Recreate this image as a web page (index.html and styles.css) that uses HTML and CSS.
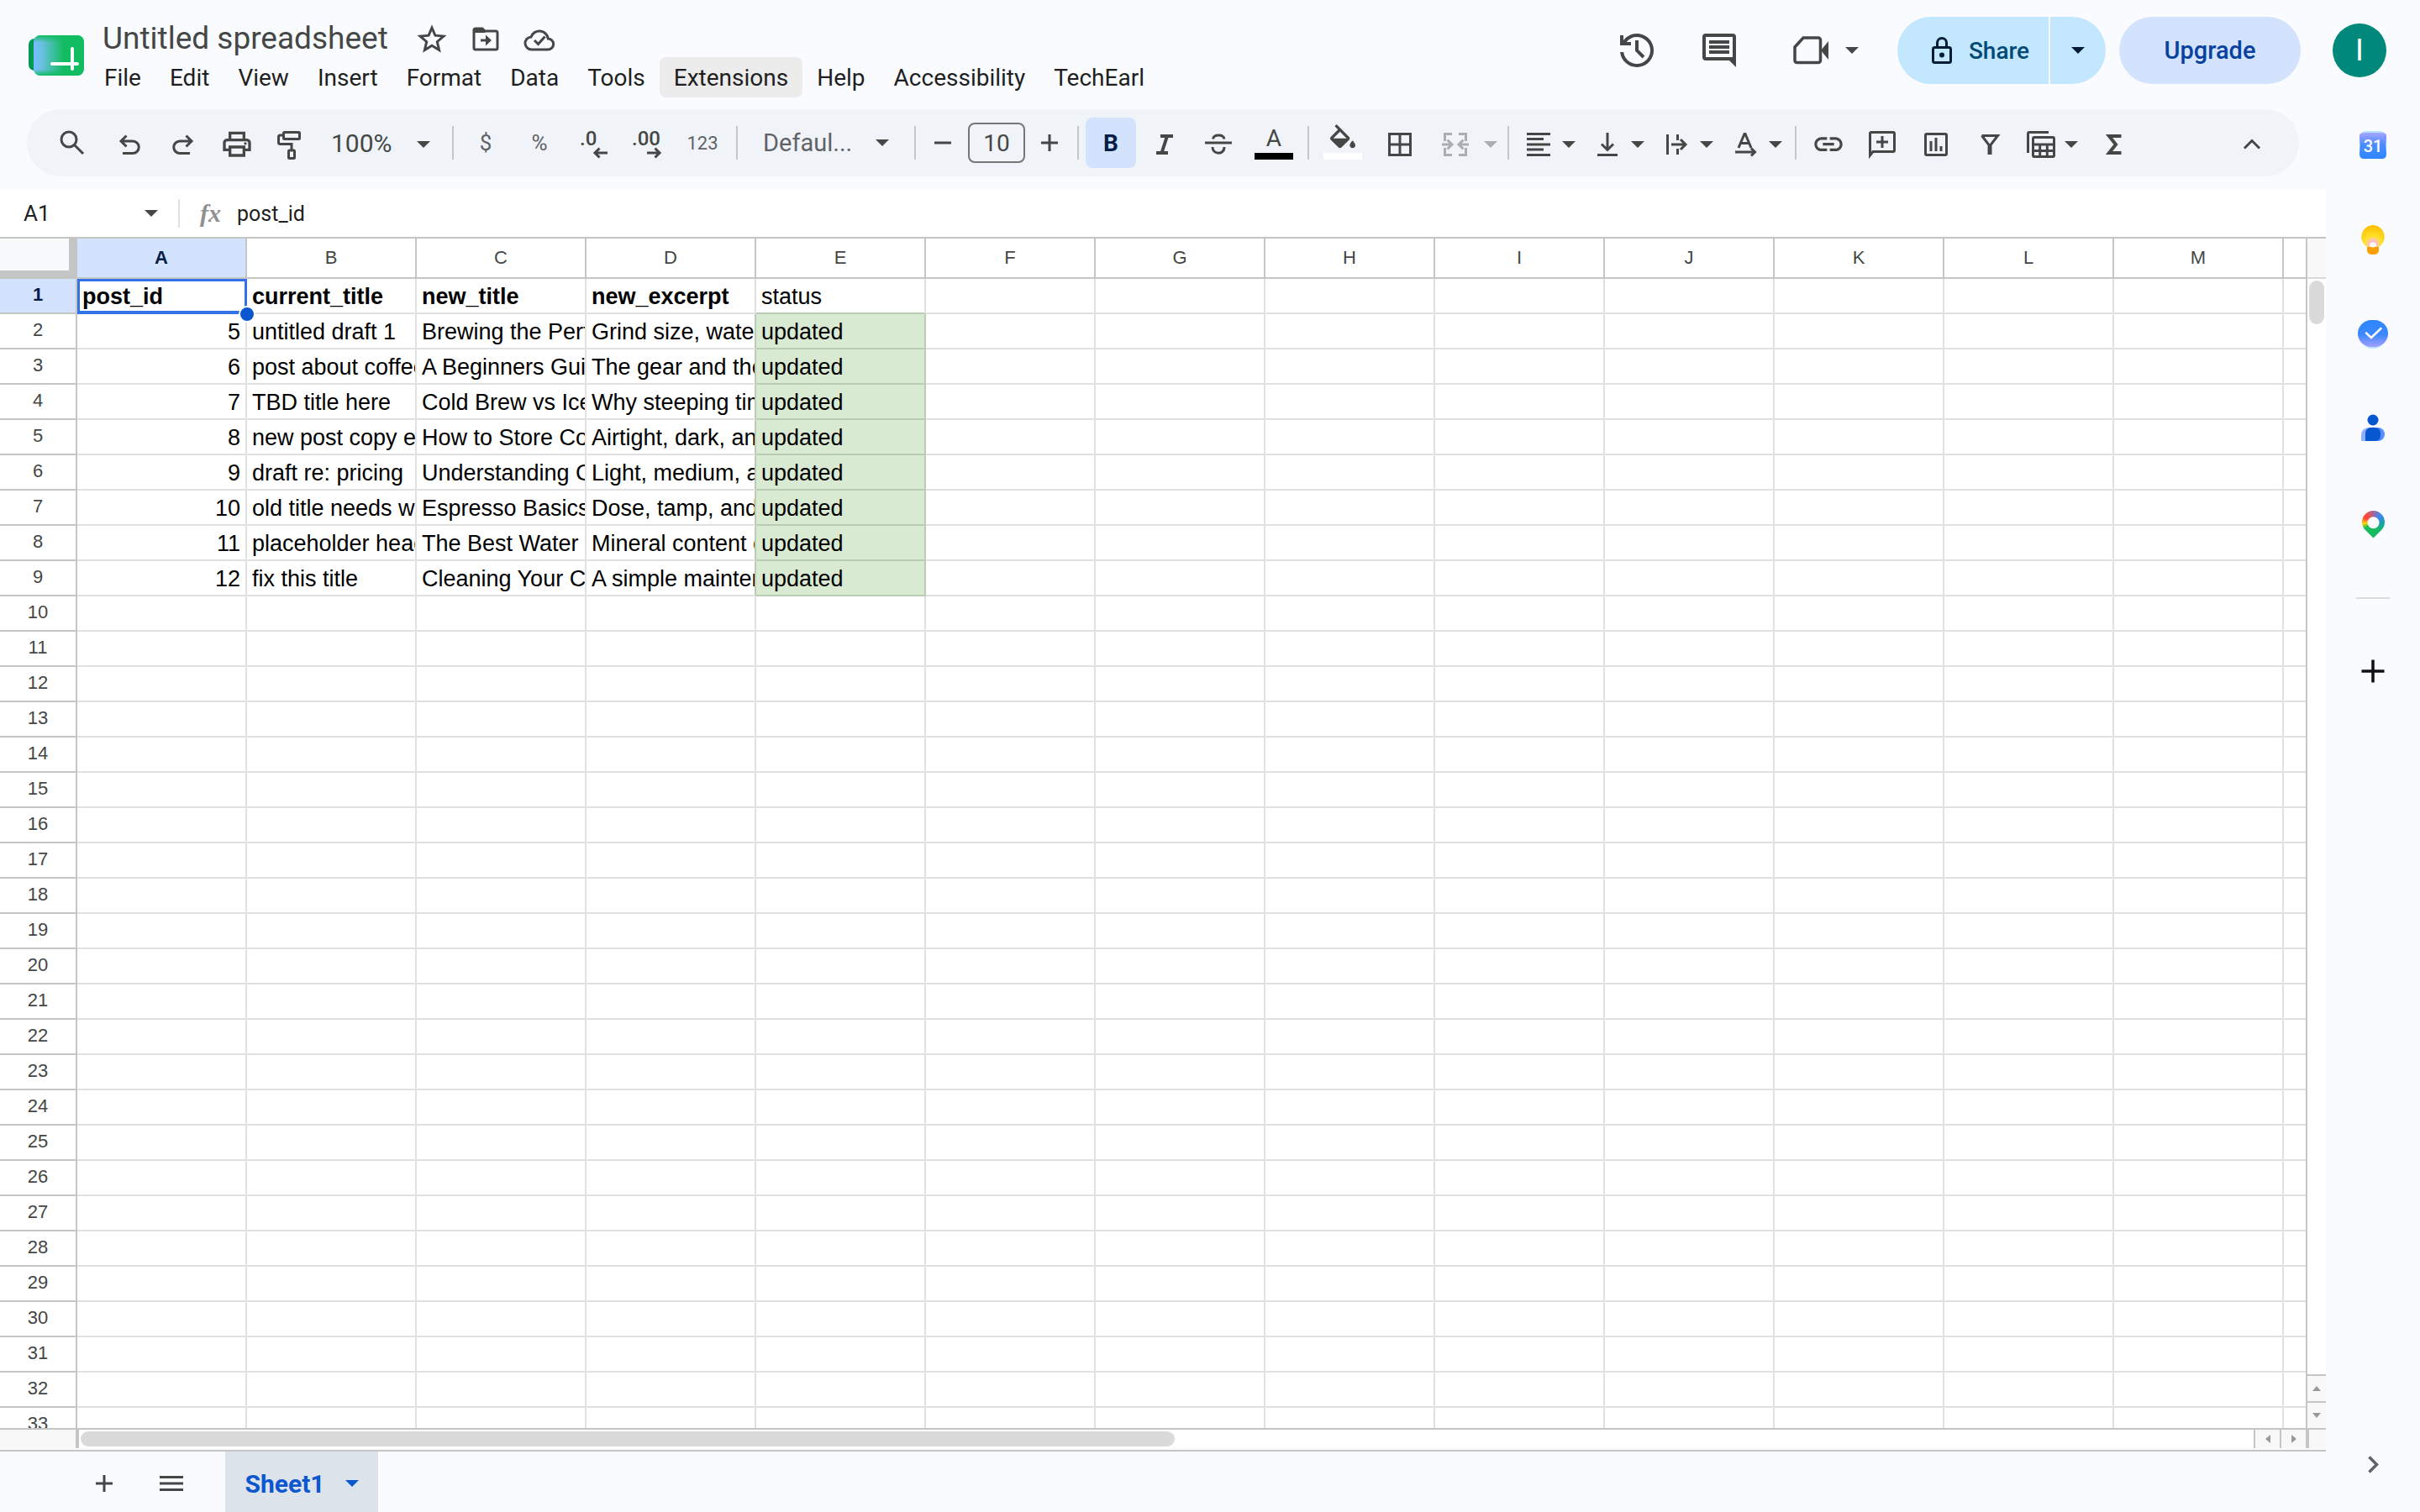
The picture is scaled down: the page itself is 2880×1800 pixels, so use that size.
FILE: index.html
```html
<!DOCTYPE html>
<html lang="en">
<head>
<meta charset="utf-8">
<title>Untitled spreadsheet</title>
<link rel="stylesheet" href="styles.css">
</head>
<body>
<div class="app">
  <header class="header">
    <svg class="logo" viewBox="0 0 68 48" aria-label="Sheets home">
      <defs>
        <linearGradient id="logoFill" x1="0" y1="0" x2="1" y2="0">
          <stop offset="0" stop-color="#78bdff"/>
          <stop offset=".15" stop-color="#6cc0e4"/>
          <stop offset=".6" stop-color="#12bc60"/>
          <stop offset="1" stop-color="#12bc60"/>
        </linearGradient>
        <linearGradient id="logoEdge" x1="0" y1="0" x2="0" y2="1">
          <stop offset="0" stop-color="#12bc60"/>
          <stop offset=".18" stop-color="#12bc60" stop-opacity="0"/>
          <stop offset=".84" stop-color="#12bc60" stop-opacity="0"/>
          <stop offset="1" stop-color="#12bc60"/>
        </linearGradient>
      </defs>
      <rect x="0" y="4" width="30" height="38" rx="7" fill="#009954"/>
      <rect x="6" y="0" width="60" height="48" rx="8" fill="url(#logoFill)"/>
      <rect x="6" y="0" width="60" height="48" rx="8" fill="url(#logoEdge)"/>
      <path d="M28 34H58M52 16V40" stroke="#fff" stroke-width="4" stroke-linecap="round"/>
    </svg>
    <div class="heading">
      <div class="title-row">
        <h1 class="title">Untitled spreadsheet</h1>
        <button class="title-btn" aria-label="Star"><svg viewBox="0 0 40 40"><path d="M20 7l3.900 9.200 10 .9-7.600 6.600 2.300 9.800L20 28.300l-8.600 5.200 2.300-9.800-7.600-6.600 10-.9z" fill="none" stroke="#444746" stroke-width="3"/></svg></button>
        <button class="title-btn" aria-label="Move"><svg viewBox="0 0 40 40"><path d="M6 9V31a2 2 0 0 0 2 2H32a2 2 0 0 0 2-2V13a2 2 0 0 0-2-2H19l-3-3H8a2 2 0 0 0-2 2z" fill="none" stroke="#444746" stroke-width="3"/><path d="M6 8h10l4 5H6zM14 20.500h6v-5l7 6.500-7 6.500v-5h-6z" fill="#444746"/></svg></button>
        <button class="title-btn" aria-label="Document status"><svg viewBox="0 0 40 40"><path d="M11 33a7.500 7.500 0 0 1-1-15 10.500 10.500 0 0 1 20.300 2A6.500 6.500 0 0 1 30 33zM14 22l4.500 4.500 8-9" fill="none" stroke="#444746" stroke-width="3"/></svg></button>
      </div>
      <nav class="menu">
        <button>File</button><button>Edit</button><button>View</button><button>Insert</button><button>Format</button><button>Data</button><button>Tools</button><button class="hovered">Extensions</button><button>Help</button><button>Accessibility</button><button>TechEarl</button>
      </nav>
    </div>
    <div class="actions">
      <button class="action" aria-label="Version history"><svg viewBox="0 0 24 24"><path d="M12 22a10 10 0 0 1-9.950-9H4.070A8 8 0 1 0 5.800 7H8.500v2H2V3h2v3A10 10 0 1 1 12 22zm3.300-5.300L11 12.400V6h2v5.600l3.700 3.700z"/></svg></button>
      <button class="action comments" aria-label="Comments"><svg viewBox="0 0 24 24"><path d="M22 22l-4-4H4a2 2 0 0 1-2-2V4a2 2 0 0 1 2-2h16a2 2 0 0 1 2 2zM4 4v12h16V4zM6 12h12v2H6zm0-3h12v2H6zm0-3h12v2H6z"/></svg></button>
      <button class="meet" aria-label="Join a call"><svg class="meet-icon" viewBox="0 0 44 34"><path d="M12 2H30a2.500 2.500 0 0 1 2.500 2.500V29a2.500 2.500 0 0 1-2.500 2.500H4.500A2.500 2.500 0 0 1 2 29V13z" fill="none" stroke="#444746" stroke-width="3.500"/><path d="M33 17L42 6V28z"/></svg><svg class="arrow" viewBox="0 0 16 8"><path d="M0 0H16L8 8z"/></svg></button>
      <div class="share">
        <button class="share-main"><svg viewBox="0 0 24 32"><rect x="1.500" y="12.500" width="21" height="18" rx="2" fill="none" stroke="#001d35" stroke-width="3"/><path d="M6.500 12V7a5.500 5.500 0 0 1 11 0v5" fill="none" stroke="#001d35" stroke-width="3"/><circle cx="12" cy="21.500" r="3" fill="#001d35"/></svg>Share</button>
        <button class="share-more" aria-label="Quick sharing actions"><svg class="arrow" viewBox="0 0 16 8"><path d="M0 0H16L8 8z"/></svg></button>
      </div>
      <button class="upgrade">Upgrade</button>
      <button class="avatar" aria-label="Account">I</button>
    </div>
  </header>

  <div class="body">
    <main class="main">
      <div class="toolbar" role="toolbar">
        <button class="tool search" aria-label="Search the menus"><svg viewBox="0 0 40 40"><path d="M25 16a9 9 0 1 1-18 0 9 9 0 0 1 18 0zM22 22L33 33"/></svg></button>
        <button class="tool" aria-label="Undo"><svg viewBox="0 0 40 40"><path d="M16.500 11.500L10 18l6.500 6.500M10 18H24a7.200 7.200 0 0 1 0 14.500H12"/></svg></button>
        <button class="tool" aria-label="Redo"><svg viewBox="0 0 40 40"><path d="M23.500 11.500L30 18l-6.500 6.500M30 18H16a7.200 7.200 0 0 0 0 14.500H28"/></svg></button>
        <button class="tool" aria-label="Print"><svg class="solid" viewBox="0 -1 24 24"><path d="M19 8h-1V3H6v5H5c-1.660 0-3 1.340-3 3v6h4v4h12v-4h4v-6c0-1.660-1.340-3-3-3zM8 5h8v3H8V5zm8 12v2H8v-4h8v2zm2-2v-2H6v2H4v-4c0-.550.450-1 1-1h14c.550 0 1 .450 1 1v4h-2z"/><circle cx="18" cy="11.500" r="1"/></svg></button>
        <button class="tool" aria-label="Paint format"><svg viewBox="0 0 40 40"><rect x="11.500" y="7.500" width="19" height="8" rx="1"/><path d="M11 11H7.500a2 2 0 0 0-2 2v6.500a2 2 0 0 0 2 2H21V28"/><rect x="17.500" y="29" width="7" height="9.500" rx="1"/></svg></button>
        <label class="dropdown zoom"><select aria-label="Zoom"><option>100%</option></select><svg class="arrow" viewBox="0 0 16 8"><path d="M0 0H16L8 8z"/></svg></label>
        <span class="divider"></span>
        <button class="tool glyph" aria-label="Format as currency">$</button>
        <button class="tool glyph" aria-label="Format as percent">%</button>
        <button class="tool" aria-label="Decrease decimal places"><svg viewBox="0 0 40 40"><text x="4" y="23">.0</text><path d="M37 32H22M27.500 26.500L22 32l5.500 5.500"/></svg></button>
        <button class="tool" aria-label="Increase decimal places"><svg viewBox="0 0 40 40"><text x="2" y="23">.00</text><path d="M20 32H35M29.500 26.500L35 32l-5.500 5.500"/></svg></button>
        <button class="tool wide glyph numbers">123</button>
        <span class="divider"></span>
        <label class="dropdown font"><select aria-label="Font"><option>Defaul...</option></select><svg class="arrow" viewBox="0 0 16 8"><path d="M0 0H16L8 8z"/></svg></label>
        <span class="divider"></span>
        <button class="tool step" aria-label="Decrease font size"><svg viewBox="0 0 40 40"><path d="M9 20H29"/></svg></button>
        <input class="size" value="10" aria-label="Font size">
        <button class="tool step" aria-label="Increase font size"><svg viewBox="0 0 40 40"><path d="M10 20H30M20 10V30"/></svg></button>
        <span class="divider"></span>
        <button class="tool bold" aria-label="Bold">B</button>
        <button class="tool" aria-label="Italic"><svg viewBox="0 0 40 40"><path d="M15 12H30M10 32H24M23 12L16.500 32" stroke-width="4"/></svg></button>
        <button class="tool" aria-label="Strikethrough"><svg viewBox="0 0 40 40"><path d="M4 20H36M27 15.500C26 9.500 14.500 9.500 13.500 15.500M13 25C13 34.500 27.500 34.500 27 25"/></svg></button>
        <button class="tool wide color" aria-label="Text color"><span>A</span><i class="swatch black"></i></button>
        <span class="divider"></span>
        <button class="tool wide color" aria-label="Fill color"><svg class="solid" viewBox="0 0 24 24"><path d="M16.560 8.940L7.620 0 6.210 1.410l2.380 2.380-5.150 5.150c-.590.590-.590 1.540 0 2.120l5.500 5.500c.290.290.680.440 1.060.440s.770-.150 1.060-.440l5.500-5.500c.590-.580.590-1.530 0-2.120zM5.210 10L10 5.210 14.790 10H5.210zM19 11.500s-2 2.170-2 3.500c0 1.100.9 2 2 2s2-.9 2-2c0-1.330-2-3.500-2-3.500z"/></svg><i class="swatch white"></i></button>
        <button class="tool" aria-label="Borders"><svg viewBox="0 0 40 40"><path d="M9.500 9.500H34.500V34.500H9.500zM22 9.500V34.500M9.500 22H34.500"/></svg></button>
        <button class="tool split merge" aria-label="Merge cells"><svg viewBox="0 0 40 40"><path d="M16 9.500H7.500V18M7.500 26V34.500H16M24 9.500H32.500V18M32.500 26V34.500H24M4 22H15M10.500 16.500L16 22l-5.500 5.500M36 22H25M29.500 16.500L24 22l5.500 5.500"/></svg><svg class="arrow" viewBox="0 0 16 8"><path d="M0 0H16L8 8z"/></svg></button>
        <span class="divider"></span>
        <button class="tool split" aria-label="Horizontal align"><svg viewBox="0 0 40 40"><path d="M6 9.500H34M6 15.500H26M6 22H34M6 28H26M6 34.500H34"/></svg><svg class="arrow" viewBox="0 0 16 8"><path d="M0 0H16L8 8z"/></svg></button>
        <button class="tool split" aria-label="Vertical align"><svg viewBox="0 0 40 40"><path d="M8 34.500H32M20 8V28M13 21.500L20 28.500l7-7"/></svg><svg class="arrow" viewBox="0 0 16 8"><path d="M0 0H16L8 8z"/></svg></button>
        <button class="tool split" aria-label="Text wrapping"><svg viewBox="0 0 40 40"><path d="M9.500 10V34M21.500 10V17M21.500 27V34M14 22H31M25 16l6 6-6 6"/></svg><svg class="arrow" viewBox="0 0 16 8"><path d="M0 0H16L8 8z"/></svg></button>
        <button class="tool split" aria-label="Text rotation"><svg viewBox="0 0 40 40"><path d="M12 26L19 9.500h1L27 26M14.500 20.500H24.500M8 31H32M27 26.500L31.500 31 27 35.500"/></svg><svg class="arrow" viewBox="0 0 16 8"><path d="M0 0H16L8 8z"/></svg></button>
        <span class="divider"></span>
        <button class="tool" aria-label="Insert link"><svg class="solid" viewBox="0 -1 24 24"><path d="M3.900 12c0-1.710 1.390-3.100 3.100-3.100h4V7H7c-2.760 0-5 2.240-5 5s2.240 5 5 5h4v-1.900H7c-1.710 0-3.100-1.390-3.100-3.100zM8 13h8v-2H8v2zm9-6h-4v1.900h4c1.710 0 3.100 1.390 3.100 3.100s-1.390 3.100-3.100 3.100h-4V17h4c2.760 0 5-2.240 5-5s-2.240-5-5-5z"/></svg></button>
        <button class="tool" aria-label="Insert comment"><svg viewBox="0 0 40 40"><path d="M5.500 35V9a1.500 1.500 0 0 1 1.500-1.500H33A1.500 1.500 0 0 1 34.500 9V29a1.500 1.500 0 0 1-1.500 1.500H9zM20 12V26M13 19H27"/></svg></button>
        <button class="tool" aria-label="Insert chart"><svg viewBox="0 0 40 40"><rect x="7.500" y="9.500" width="25" height="25" rx="1.500"/><path d="M14 18V30M20 14V30M26 24V30"/></svg></button>
        <button class="tool" aria-label="Create a filter"><svg viewBox="0 0 40 40"><path d="M10.500 11.500H29.500L21 22.500V34M19 34V22.500L10.500 11.500"/></svg></button>
        <button class="tool split" aria-label="Filter views"><svg viewBox="0 0 40 40"><path d="M4.500 32V9A1.500 1.500 0 0 1 6 7.500H29"/><rect x="10.500" y="13.500" width="25" height="23" rx="1.500"/><path d="M10 22H36M10 29.500H36M18.700 22V37M27.300 22V37"/></svg><svg class="arrow" viewBox="0 0 16 8"><path d="M0 0H16L8 8z"/></svg></button>
        <button class="tool wide" aria-label="Functions"><svg viewBox="0 0 40 40"><path d="M28.500 12H14L22 22 14 32H28.500" stroke-width="4"/></svg></button>
        <button class="tool collapse" aria-label="Hide the menus"><svg viewBox="0 0 40 40"><path d="M11 26.500L20 17.500l9 9"/></svg></button>
      </div>

      <div class="formula-bar">
        <label class="name-box"><input value="A1" aria-label="Name box"><svg class="arrow" viewBox="0 0 16 8"><path d="M0 0H16L8 8z"/></svg></label>
        <span class="fx">fx</span>
        <input class="formula" value="post_id" aria-label="Formula">
      </div>

      <div class="workspace">
        <div class="sheet">
          <table class="cells" id="cells">
            <colgroup><col class="col-index"><col class="col" span="13"><col></colgroup>
            <thead>
              <tr><th class="corner"></th><th class="active">A</th><th>B</th><th>C</th><th>D</th><th>E</th><th>F</th><th>G</th><th>H</th><th>I</th><th>J</th><th>K</th><th>L</th><th>M</th><th></th></tr>
            </thead>
            <tbody>
              <tr><th class="active">1</th><td class="b">post_id</td><td class="b">current_title</td><td class="b">new_title</td><td class="b">new_excerpt</td><td class="above">status</td></tr>
              <tr><th>2</th><td class="n">5</td><td>untitled draft 1</td><td>Brewing the Perf</td><td>Grind size, water</td><td class="updated">updated</td></tr>
              <tr><th>3</th><td class="n">6</td><td>post about coffee</td><td>A Beginners Gui</td><td>The gear and the</td><td class="updated">updated</td></tr>
              <tr><th>4</th><td class="n">7</td><td>TBD title here</td><td>Cold Brew vs Ice</td><td>Why steeping tim</td><td class="updated">updated</td></tr>
              <tr><th>5</th><td class="n">8</td><td>new post copy e</td><td>How to Store Co</td><td>Airtight, dark, an</td><td class="updated">updated</td></tr>
              <tr><th>6</th><td class="n">9</td><td>draft re: pricing</td><td>Understanding C</td><td>Light, medium, a</td><td class="updated">updated</td></tr>
              <tr><th>7</th><td class="n">10</td><td>old title needs wo</td><td>Espresso Basics</td><td>Dose, tamp, and</td><td class="updated">updated</td></tr>
              <tr><th>8</th><td class="n">11</td><td>placeholder head</td><td>The Best Water f</td><td>Mineral content o</td><td class="updated">updated</td></tr>
              <tr><th>9</th><td class="n">12</td><td>fix this title</td><td>Cleaning Your C</td><td>A simple mainten</td><td class="updated">updated</td></tr>
            </tbody>
          </table>
          <div class="selection"><i class="handle"></i></div>
        </div>
        <div class="vscroll">
          <div class="vscroll-head"></div>
          <div class="vscroll-track"><div class="vthumb"></div></div>
          <button class="vbtn" aria-label="Scroll up"><svg viewBox="0 0 10 6"><path d="M0 6L5 0l5 6z"/></svg></button>
          <button class="vbtn" aria-label="Scroll down"><svg viewBox="0 0 10 6"><path d="M0 0L5 6l5-6z"/></svg></button>
        </div>
        <div class="hscroll">
          <div class="hscroll-head"></div>
          <div class="hscroll-track"><div class="hthumb"></div></div>
          <button class="hbtn" aria-label="Scroll left"><svg viewBox="0 0 6 10"><path d="M6 0L0 5l6 5z"/></svg></button>
          <button class="hbtn" aria-label="Scroll right"><svg viewBox="0 0 6 10"><path d="M0 0L6 5 0 10z"/></svg></button>
        </div>
        <div class="scroll-corner"></div>
      </div>

      <footer class="tabs">
        <button class="tab-tool" aria-label="Add sheet"><svg viewBox="0 0 40 40"><path d="M10 20H30M20 10V30"/></svg></button>
        <button class="tab-tool" aria-label="All sheets"><svg viewBox="0 0 40 40"><path d="M6 12.500H34M6 20H34M6 27.500H34"/></svg></button>
        <button class="tab">Sheet1<svg class="arrow" viewBox="0 0 16 8"><path d="M0 0H16L8 8z"/></svg></button>
      </footer>
    </main>

    <aside class="side">
      <button class="side-btn" aria-label="Calendar"><svg viewBox="0 0 40 40"><defs><linearGradient id="cal" x1="0" y1="0" x2="0" y2="1"><stop offset="0" stop-color="#a8a4ff"/><stop offset=".45" stop-color="#4a8cff"/><stop offset="1" stop-color="#2e86ff"/></linearGradient></defs><rect x="6" y="3" width="28" height="12" rx="5" fill="#b9e2ff"/><path d="M8 5H32Q37 5 36 11 35 20 36 30 36 36 31 36H9Q4 36 4 30 5 20 4 11 3 5 8 5z" fill="url(#cal)"/><text x="20" y="28" text-anchor="middle">31</text></svg></button>
      <button class="side-btn" aria-label="Keep"><svg viewBox="0 0 40 40"><defs><radialGradient id="bulb" cx=".5" cy=".85" r=".8"><stop offset="0" stop-color="#ffb4cf"/><stop offset=".25" stop-color="#ffc5b0"/><stop offset=".4" stop-color="#ffe332"/><stop offset="1" stop-color="#ffbf00"/></radialGradient></defs><path d="M20 3a14 14 0 0 1 7 26H13A14 14 0 0 1 20 3z" fill="url(#bulb)"/><path d="M13 29H27V33a5 5 0 0 1-5 5H18a5 5 0 0 1-5-5z" fill="#f9a000"/><ellipse cx="20" cy="26.500" rx="4" ry="3" fill="#fff"/></svg></button>
      <button class="side-btn" aria-label="Tasks"><svg viewBox="0 0 40 40"><defs><linearGradient id="task" x1="0" y1="0" x2="0" y2="1"><stop offset="0" stop-color="#2e86ff"/><stop offset=".55" stop-color="#3d88ff"/><stop offset="1" stop-color="#a3a0ff"/></linearGradient></defs><ellipse cx="20" cy="24" rx="15" ry="14" fill="#b9e2ff"/><rect x="2" y="4" width="36" height="32" rx="16" fill="url(#task)"/><path d="M12 19.500l6 5.500L29.500 14" fill="none" stroke="#fff" stroke-width="2.500" stroke-linecap="round"/></svg></button>
      <button class="side-btn" aria-label="Contacts"><svg viewBox="0 0 40 40"><circle cx="20" cy="11" r="6.500" fill="#0757cf"/><path d="M6 36V30Q6 20 16 20H20V36z" fill="#8eaeff"/><rect x="18" y="20" width="16" height="16" rx="8" fill="#5a8dff"/><path d="M11 36V28Q11 20 18 20H22Q29 20 29 28T23 36z" fill="#0757cf"/></svg></button>
      <button class="side-btn" aria-label="Maps"><span class="pin"><i></i></span></button>
      <hr class="side-rule">
      <button class="side-btn" aria-label="Get add-ons"><svg viewBox="0 0 40 40"><path d="M6.500 20H33.500M20 6.500V33.500" stroke="#111" stroke-width="3.500"/></svg></button>
      <button class="side-btn hide" aria-label="Hide side panel"><svg viewBox="0 0 40 40"><path d="M15.500 11.500l9 9-9 9" fill="none" stroke="#5f6368" stroke-width="3.500"/></svg></button>
    </aside>
  </div>
</div>
<script src="sheet.js"></script>
</body>
</html>
```
FILE: styles.css
```css
* {
  box-sizing: border-box;
}

body {
  margin: 0;
  background: #f9fbff;
  color: #1f1f1f;
  font-family: Roboto, "Liberation Sans", sans-serif;
  font-size: 28px;
}

button,
input,
select {
  margin: 0;
  padding: 0;
  border: 0;
  background: none;
  color: inherit;
  font: inherit;
}

button {
  display: flex;
  align-items: center;
  justify-content: center;
}

svg {
  display: block;
  flex: none;
}

.app {
  display: flex;
  flex-direction: column;
  height: 100vh;
  overflow: hidden;
}

/* Header */

.header {
  display: flex;
  align-items: flex-start;
  height: 130px;
  padding: 20px 40px 0 34px;
}

.logo {
  width: 68px;
  height: 48px;
  margin-top: 22px;
}

.heading {
  margin-left: 4px;
}

.title-row {
  display: flex;
  align-items: center;
  gap: 24px;
  height: 48px;
  padding-top: 4px;
}

.title {
  margin: 0 8px 0 16px;
  color: #444746;
  font-size: 37px;
  font-weight: 400;
  line-height: 48px;
  white-space: nowrap;
}

.title-btn,
.title-btn svg {
  width: 40px;
  height: 40px;
}

.menu {
  display: flex;
  padding-left: 1px;
}

.menu button {
  height: 48px;
  padding: 0 17px;
  border-radius: 8px;
}

.menu .hovered {
  background: #ececec;
}

.actions {
  display: flex;
  align-items: center;
  height: 80px;
  margin-left: auto;
}

.action svg {
  width: 48px;
  height: 48px;
  fill: #444746;
}

.comments {
  margin-left: 50px;
}

.meet {
  gap: 18px;
  margin: 0 46px 0 64px;
  fill: #444746;
}

.meet-icon {
  width: 44px;
  height: 34px;
}

.arrow {
  width: 16px;
  height: 8px;
}

.share {
  display: flex;
  gap: 2px;
  height: 80px;
  margin-right: 16px;
  font-weight: 500;
}

.share-main {
  width: 180px;
  gap: 20px;
  padding-left: 18px;
  border-radius: 40px 0 0 40px;
  background: #c2e7ff;
  color: #004a77;
}

.share-main svg {
  width: 24px;
  height: 32px;
}

.share-more {
  width: 66px;
  border-radius: 0 40px 40px 0;
  background: #c2e7ff;
  fill: #001d35;
}

.upgrade {
  width: 216px;
  height: 80px;
  margin-right: 38px;
  border-radius: 40px;
  background: #d3e3fd;
  color: #0842a0;
  font-size: 29px;
  font-weight: 500;
}

.avatar {
  width: 64px;
  height: 64px;
  border-radius: 50%;
  background: #00897b;
  color: #fff;
  font-size: 36px;
}

/* Body layout */

.body {
  display: flex;
  flex: 1;
  min-height: 0;
}

.main {
  display: flex;
  flex: 1;
  flex-direction: column;
  min-width: 0;
}

/* Toolbar */

.toolbar {
  display: flex;
  align-items: center;
  gap: 4px;
  height: 80px;
  margin: 0 32px 16px;
  padding: 0 26px 0 24px;
  border-radius: 40px;
  background: #f0f4f9;
  color: #444746;
}

.tool {
  flex: none;
  width: 60px;
  height: 60px;
  border-radius: 8px;
}

.tool svg {
  width: 40px;
  height: 40px;
  fill: none;
  stroke: #444746;
  stroke-width: 3px;
}

.tool .solid {
  fill: #444746;
  stroke: none;
}

.tool text {
  fill: #444746;
  stroke: none;
  font-size: 24px;
  font-weight: 500;
}

.tool .arrow,
.dropdown .arrow {
  width: 16px;
  height: 8px;
  margin-top: 4px;
  fill: #444746;
  stroke: none;
}

.search {
  margin-right: 4px;
}

.wide {
  width: 64px;
}

.step {
  width: 50px;
}

.glyph {
  color: #5f6368;
  font-size: 26px;
}

.numbers {
  font-size: 22px;
}

.divider {
  flex: none;
  width: 2px;
  height: 40px;
  margin: 0 4px;
  background: #c7c7c7;
}

.dropdown {
  display: flex;
  align-items: center;
  justify-content: space-between;
  height: 60px;
}

.dropdown select {
  appearance: none;
}

.zoom {
  width: 150px;
  padding: 0 18px 0 14px;
  font-size: 30px;
}

.font {
  width: 194px;
  padding: 0 22px;
  color: #5f6368;
  font-size: 29px;
}

.font .arrow {
  margin-top: 0;
}

.size {
  width: 68px;
  height: 48px;
  border: 2px solid #747775;
  border-radius: 8px;
  text-align: center;
}

.bold {
  background: #d3e3fd;
  color: #041e49;
  font-weight: 700;
}

.color {
  flex-direction: column;
  justify-content: flex-end;
  height: 80px;
  padding-bottom: 20px;
}

.color span {
  height: 26px;
  line-height: 26px;
}

.color svg {
  height: 40px;
  margin-bottom: -10px;
}

.swatch {
  flex: none;
  width: 46px;
  height: 8px;
  margin-top: 4px;
}

.black {
  background: #000;
}

.white {
  background: #fff;
}

.split {
  width: 78px;
  gap: 8px;
}

.merge {
  width: 88px;
  gap: 14px;
  padding-left: 10px;
  opacity: .4;
}

.collapse {
  margin-left: auto;
}

/* Formula bar */

.formula-bar {
  display: flex;
  align-items: center;
  height: 56px;
  background: #fff;
}

.name-box {
  display: flex;
  align-items: center;
  width: 214px;
  height: 34px;
  padding: 0 24px 0 28px;
  border-right: 2px solid #dde3ea;
}

.name-box input {
  flex: 1;
  min-width: 0;
  height: 34px;
  font-size: 26px;
}

.name-box .arrow {
  fill: #444746;
}

.fx {
  width: 68px;
  padding-left: 24px;
  color: #8f9191;
  font: italic 700 30px "Liberation Serif", serif;
}

.formula {
  flex: 1;
  height: 40px;
  font-size: 25px;
}

/* Grid */

.workspace {
  display: grid;
  flex: 1;
  grid-template-columns: 1fr 24px;
  grid-template-rows: 1fr 24px;
  min-height: 0;
  border-top: 2px solid #c4c5c5;
}

.sheet {
  position: relative;
  min-width: 0;
  min-height: 0;
  overflow: hidden;
  background: #fff;
}

.cells {
  width: 100%;
  border-spacing: 0;
  table-layout: fixed;
  font-family: "Liberation Sans", Arial, sans-serif;
}

.col-index {
  width: 92px;
}

.col {
  width: 202px;
}

.cells th,
.cells td {
  height: 42px;
  border: 0 solid #e1e1e1;
  border-width: 0 2px 2px 0;
  line-height: 30px;
  white-space: nowrap;
}

.cells th {
  padding: 0 0 2px;
  border-color: #c4c5c5;
  color: #444746;
  font-size: 22px;
  font-weight: 400;
}

.cells thead th {
  height: 48px;
  padding: 0;
}

.cells thead .corner {
  border-width: 0 10px 10px 0;
  background: #f8f9fa;
}

.cells .active {
  background: #d3e3fd;
  color: #041e49;
  font-weight: 700;
}

.cells td {
  padding: 2px 4px 0 6px;
  overflow: hidden;
  color: #000;
  font-size: 27px;
}

.cells th:last-child,
.cells td:last-child {
  border-right: 0;
}

.cells .b {
  font-weight: 700;
}

.cells .n {
  padding-right: 6px;
  text-align: right;
}

.cells .updated {
  border-color: #b9cdb5;
  background: #d9ead3;
}

.cells td:has(+ .updated) {
  border-right-color: #b9cdb5;
}

.cells .above {
  border-bottom-color: #b9cdb5;
}

.selection {
  position: absolute;
  top: 48px;
  left: 92px;
  width: 202px;
  height: 42px;
  border: 3px solid #3271e8;
  border-bottom-width: 4px;
}

.handle {
  position: absolute;
  right: -13px;
  bottom: -14px;
  width: 20px;
  height: 20px;
  border: 2px solid #fff;
  border-radius: 50%;
  background: #0b57d0;
}

/* Scrollbars */

.vscroll {
  display: flex;
  flex-direction: column;
  border-left: 2px solid #c4c5c5;
  background: #fff;
}

.vscroll-head {
  height: 48px;
  border-bottom: 2px solid #d9d9d9;
  background: #f8f8f8;
}

.vscroll-track {
  flex: 1;
  padding: 2px;
}

.vthumb {
  height: 52px;
  border-radius: 9px;
  background: #dadada;
}

.vbtn {
  height: 32px;
  border-top: 2px solid #c4c5c5;
  background: #f8f8f8;
}

.vbtn svg {
  width: 10px;
  height: 6px;
  fill: #999;
}

.hscroll {
  display: flex;
  height: 24px;
  border-top: 2px solid #c4c5c5;
  background: #fff;
}

.hscroll-head {
  width: 94px;
  border-right: 4px solid #c4c5c5;
  background: #f8f8f8;
}

.hscroll-track {
  flex: 1;
  padding: 2px;
}

.hthumb {
  width: 50.400%;
  height: 18px;
  border-radius: 9px;
  background: #dadada;
}

.hbtn {
  width: 31px;
  border-left: 2px solid #c4c5c5;
  background: #f8f8f8;
}

.hbtn svg {
  width: 6px;
  height: 10px;
  fill: #999;
}

.scroll-corner {
  border-top: 2px solid #c4c5c5;
  border-left: 4px solid #c4c5c5;
  background: #f8f8f8;
}

/* Sheet tabs */

.tabs {
  display: flex;
  height: 74px;
  margin-top: 2px;
  padding-left: 84px;
  border-top: 2px solid #c4c5c5;
}

.tab-tool {
  width: 80px;
  padding-top: 4px;
}

.tab-tool svg {
  width: 40px;
  height: 40px;
  fill: none;
  stroke: #444746;
  stroke-width: 3px;
}

.tab {
  gap: 24px;
  width: 182px;
  margin-left: 24px;
  padding-top: 4px;
  background: #dde3ea;
  color: #0b57d0;
  font-size: 30px;
  font-weight: 700;
  fill: #0b57d0;
}

/* Side panel */

.side {
  display: flex;
  flex-direction: column;
  align-items: center;
  width: 112px;
  padding: 17px 0 22px;
}

.side-btn {
  width: 112px;
  height: 52px;
  margin-bottom: 60px;
}

.side-btn svg {
  width: 40px;
  height: 40px;
}

.side-btn text {
  fill: #fff;
  font-size: 20px;
  font-weight: 500;
}

.pin {
  display: flex;
  align-items: center;
  justify-content: center;
  width: 27px;
  height: 27px;
  border-radius: 50% 50% 0 50%;
  background: conic-gradient(#4285f4, #1a9fb0 50deg, #12b866 100deg, #1dbf5a 190deg, #ffd500 215deg, #ff4a3d 250deg, #ff4a3d 270deg, #4285f4);
  transform: rotate(45deg);
}

.pin i {
  width: 14px;
  height: 14px;
  border-radius: 50%;
  background: #f9fbff;
}

.side-rule {
  width: 40px;
  height: 2px;
  margin: 4px 0 60px;
  border: 0;
  background: #dadce0;
}

.hide {
  height: 70px;
  margin-top: auto;
  margin-bottom: 0;
}
```
FILE: sheet.js
```js
// Fills every row out to the last visible column and adds the empty rows.
const body = document.querySelector("#cells tbody");
const columns = 15;
const rows = 34;

for (let r = 0; r < rows; r++) {
  let row = body.rows[r];
  if (!row) {
    row = body.insertRow();
    const head = document.createElement("th");
    head.textContent = r + 1;
    row.append(head);
  }
  while (row.cells.length < columns) {
    row.insertCell();
  }
}
```
